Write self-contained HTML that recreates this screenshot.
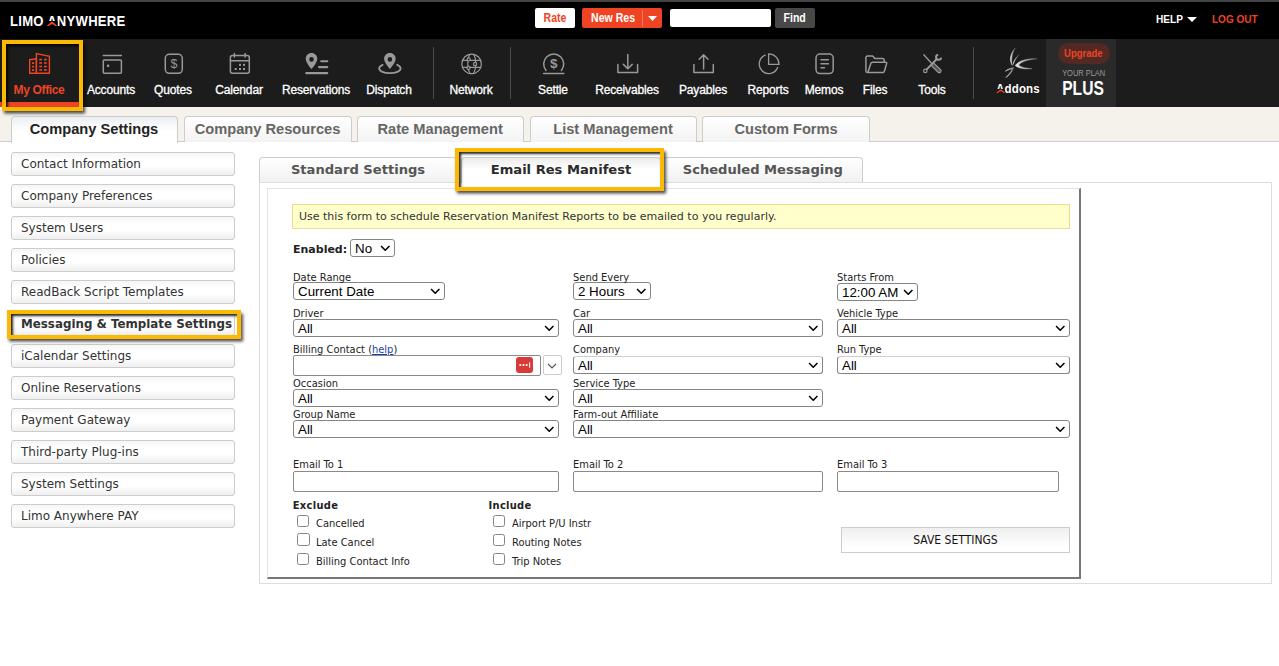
<!DOCTYPE html>
<html lang="en">
<head>
<meta charset="utf-8">
<title>Limo Anywhere - My Office</title>
<style>
*{box-sizing:border-box;margin:0;padding:0}
html,body{width:1279px;height:666px;overflow:hidden;background:#fff;font-family:"Liberation Sans",sans-serif;}
.abs{position:absolute}
#topstrip{position:absolute;left:0;top:0;width:1279px;height:2px;background:#444645}
#hdr{position:absolute;left:0;top:2px;width:1279px;height:37px;background:#000}
#nav{position:absolute;left:0;top:39px;width:1279px;height:68px;background:#1c1c1c}
#beige{position:absolute;left:0;top:107px;width:1279px;height:35px;background:#f5f2ec;border-bottom:1px solid #ccc}
.logo{position:absolute;left:10px;top:11px;color:#fff;font-weight:bold;font-size:15.4px;line-height:16px;letter-spacing:0.3px;white-space:nowrap;transform-origin:left center;transform:scaleX(0.85)}
.hbtn{position:absolute;top:6px;height:20px;border-radius:2px;font-size:12px;font-weight:bold;line-height:20px;text-align:center;white-space:nowrap}
.sx{display:inline-block;transform:scaleX(0.88);transform-origin:center}
.ni{position:absolute;top:0;height:68px;color:#fff;font-size:12px;text-align:center;white-space:nowrap;letter-spacing:-0.15px;-webkit-text-stroke:0.3px #fff}
.ni span{position:absolute;left:-50px;right:-50px;top:43.5px;line-height:14px;text-align:center}
.ni svg{position:absolute;left:50%;top:12px;margin-left:-13px;width:26px;height:26px;fill:none;stroke:#9a9a9a;stroke-width:1.5;stroke-linecap:round;stroke-linejoin:round}
.sep{position:absolute;top:8px;width:1px;height:52px;background:#4a4a4a}
.mtab{position:absolute;top:116px;height:26px;border:1px solid #ccc;border-bottom:none;border-radius:4px 4px 0 0;background:linear-gradient(#fff,#f3f3f3);color:#666;font-weight:bold;font-size:14.65px;line-height:24px;text-align:center;white-space:nowrap}
.mtab.on{background:linear-gradient(#eceff2,#fff 55%);color:#222;height:27px}
.sb{position:absolute;left:11px;width:224px;height:24px;border:1px solid #ccc;border-radius:3px;background:linear-gradient(#f6f6f6 0%,#fff 35%,#fff 60%,#efefef 100%);font-family:"DejaVu Sans",sans-serif;font-size:12px;line-height:22px;color:#333;padding-left:9px;white-space:nowrap}
.stab{position:absolute;top:157px;height:25px;border:1px solid #ccc;border-bottom:none;border-radius:4px 4px 0 0;background:linear-gradient(#fff,#f1f1f1);color:#555;font-family:"DejaVu Sans",sans-serif;font-weight:bold;font-size:13.1px;line-height:24px;text-align:center;white-space:nowrap}
.hl{position:absolute;border:4px solid #fbb904;box-shadow:2px 2.5px 3px rgba(0,0,0,.7), inset 2px 2px 2.5px rgba(0,0,0,.85)}
.lbl{position:absolute;z-index:2;margin-top:0.5px;font-family:"DejaVu Sans Condensed","DejaVu Sans",sans-serif;font-size:11px;line-height:13px;color:#222;white-space:nowrap}
.sel{position:absolute;height:18px;border:1px solid #858585;border-radius:3px;background:#fff;font-size:13.33px;line-height:17.3px;color:#000;padding-left:4px;white-space:nowrap}
.sel svg{position:absolute;right:3.5px;top:5px;width:10.5px;height:6.3px;fill:none;stroke:#000;stroke-width:1.45}
.inp{position:absolute;height:21px;border:1px solid #8a8a8a;border-radius:2px;background:#fff}
.cb{position:absolute;width:12.6px;height:12.3px;border:1px solid #858585;border-radius:2.5px;background:#fff}
</style>
</head>
<body>
<div id="topstrip"></div>
<div id="hdr">
  <div class="logo">LIMO <span style="position:relative">A<i style="position:absolute;left:-0.5px;bottom:2.5px;width:12.5px;height:5.4px;background:#000"></i><svg style="position:absolute;left:-0.8px;bottom:2.9px" width="13" height="5.1" viewBox="0 0 12 6" preserveAspectRatio="none"><path d="M0 6L5 1.2Q6 0.5 7 1.2L12 6L9.4 6Q6 1.7 2.6 6Z" fill="#ee4423"/></svg></span>NYWHERE</div>
  <div class="hbtn" style="left:535px;width:40px;background:#fff;color:#ee4423"><span class="sx">Rate</span></div>
  <div class="hbtn" style="left:582px;width:80px;background:#ee4423;color:#fff;text-align:left;padding-left:6px"><span class="sx">New Res</span><i style="position:absolute;left:60px;top:2px;width:1px;height:16px;background:#f47a60"></i></div>
  <svg class="abs" width="9" height="5" viewBox="0 0 9 5" style="left:648px;top:14px"><path d="M0 0h9L4.5 5z" fill="#fff"/></svg>
  <div class="abs" style="left:670px;top:6.5px;width:101px;height:18px;background:#fff;border-radius:2px"></div>
  <div class="hbtn" style="left:775px;width:40px;background:#484848;color:#fff"><span class="sx">Find</span></div>
  <div class="abs" style="left:1156px;top:10px;color:#fff;font-weight:bold;font-size:11.5px;line-height:14px;white-space:nowrap;transform:scaleX(0.88);transform-origin:left center">HELP</div>
  <svg class="abs" width="10" height="5" viewBox="0 0 10 5" style="left:1187px;top:15px"><path d="M0 0h10L5 5z" fill="#fff"/></svg>
  <div class="abs" style="left:1212px;top:10px;color:#ee4423;font-weight:bold;font-size:11.5px;line-height:14px;white-space:nowrap;transform:scaleX(0.87);transform-origin:left center">LOG OUT</div>
</div>
<div id="nav">
  <div class="abs" style="left:0;top:63px;width:79px;height:5px;background:#ee4423"></div>
<svg class="abs" style="left:0;top:0" width="1279" height="67" viewBox="0 39 1279 67" fill="none" stroke="#999" stroke-width="1.5" stroke-linecap="round" stroke-linejoin="round">
  <!-- My Office -->
  <g stroke="#ee4423" stroke-width="1.4" stroke-linejoin="miter" stroke-linecap="butt">
    <path d="M29.7 73.3V59.7L36.4 58.7V73.3Z"/>
    <path d="M36.4 73.3V53.6L49.4 56.4V73.3Z"/>
    <g stroke="none" fill="#ee4423">
      <rect x="32.1" y="62.2" width="2" height="1.8"/><rect x="32.1" y="65.7" width="2" height="1.8"/><rect x="32.1" y="69.2" width="2" height="1.8"/>
      <rect x="39.2" y="58.8" width="2.8" height="1.6"/><rect x="44" y="58.8" width="2.8" height="1.6"/>
      <rect x="39.2" y="62.2" width="2.8" height="1.6"/><rect x="44" y="62.2" width="2.8" height="1.6"/>
      <rect x="39.2" y="65.7" width="2.8" height="1.6"/><rect x="44" y="65.7" width="2.8" height="1.6"/>
      <rect x="39.2" y="69.2" width="2.8" height="1.6"/><rect x="44" y="69.2" width="2.8" height="1.6"/>
    </g>
  </g>
  <!-- Accounts -->
  <path d="M103.3 55.5H121.4"/>
  <rect x="103.3" y="60.1" width="18.1" height="13.1" rx="1"/>
  <rect x="107" y="64.6" width="2.2" height="2.4" fill="#999" stroke="none"/>
  <!-- Quotes -->
  <rect x="165.3" y="54.3" width="17" height="19" rx="4"/>
  <text x="174" y="68.2" font-family="Liberation Sans, sans-serif" font-size="12.5" text-anchor="middle" fill="#999" stroke="none">$</text>
  <!-- Calendar -->
  <rect x="230.4" y="55.4" width="18.9" height="17.9" rx="2"/>
  <path d="M234.4 53.6V57M245.1 53.6V57M230.4 60.8H249.3"/>
  <g fill="#999" stroke="none">
    <rect x="239" y="63.8" width="2" height="2"/><rect x="243" y="63.8" width="2" height="2"/>
    <rect x="234.7" y="68" width="2" height="2"/><rect x="239" y="68" width="2" height="2"/><rect x="243" y="68" width="2" height="2"/>
  </g>
  <!-- Reservations -->
  <path d="M311.5 53C308.2 53 305.7 55.6 305.7 58.8C305.7 62.8 311.5 69.2 311.5 69.2C311.5 69.2 317.3 62.8 317.3 58.8C317.3 55.6 314.8 53 311.5 53ZM311.5 57.1A2.3 2.3 0 1 1 311.5 61.7A2.3 2.3 0 1 1 311.5 57.1Z" fill="#999" stroke="none" fill-rule="evenodd"/>
  <path d="M321.2 61.2H327.3M319 67.1H327.3M306.2 73.1H327.3" stroke-width="2.1"/>
  <!-- Dispatch -->
  <path d="M389.9 53C386.6 53 384.1 55.6 384.1 58.8C384.1 62.8 389.9 69 389.9 69C389.9 69 395.7 62.8 395.7 58.8C395.7 55.6 393.2 53 389.9 53ZM389.9 57.1A2.3 2.3 0 1 1 389.9 61.7A2.3 2.3 0 1 1 389.9 57.1Z" fill="#999" stroke="none" fill-rule="evenodd"/>
  <path d="M382.6 64.8C380.5 65.7 379.2 67 379.2 68.4C379.2 71.1 384 73.2 389.9 73.2C395.8 73.2 400.6 71.1 400.6 68.4C400.6 67 399.3 65.7 397.2 64.8" stroke-width="1.8"/>
  <!-- Network -->
  <g stroke-width="1.2">
    <circle cx="471.6" cy="63.9" r="9.8"/>
    <path d="M462.6 60.3H480.6M462.6 67.4H480.6"/>
    <path d="M470 54.3C467 58 467 70 470.5 73.6M473.5 54.3C476.5 58 476.5 70 473 73.6"/>
    <circle cx="468.7" cy="59.4" r="1.5" fill="#1c1c1c"/><circle cx="475.1" cy="64" r="1.6" fill="#1c1c1c"/><circle cx="468.5" cy="67.9" r="1.5" fill="#1c1c1c"/>
  </g>
  <!-- Settle -->
  <path d="M546 70.4A10 10 0 1 1 561.4 70.4"/>
  <path d="M543.6 73.5H563.8"/>
  <text x="553.8" y="68.2" font-family="Liberation Sans, sans-serif" font-size="13.5" font-weight="bold" text-anchor="middle" fill="#999" stroke="none">$</text>
  <!-- Receivables -->
  <path d="M617.9 64.4V72.6H637.6V64.4M627.8 54.6V68.6M623.4 64.4L627.8 68.8L632.2 64.4"/>
  <!-- Payables -->
  <path d="M693.9 64.4V72.6H713.3V64.4M703.6 69V54.8M699.2 59.2L703.6 54.8L708 59.2"/>
  <!-- Reports -->
  <path d="M765.2 55.2A9.5 9.5 0 1 0 777.6 67.4" stroke-width="1.3"/>
  <path d="M768.6 53.8V64.3H779A10.4 10.4 0 0 0 768.6 53.8Z" stroke-width="1.3" stroke-linejoin="miter"/>
  <!-- Memos -->
  <rect x="816" y="54" width="17.2" height="19.6" rx="4"/>
  <path d="M821 59.8H828.4M821 63.8H828.4M821 67.7H824.6"/>
  <!-- Files -->
  <path d="M884.2 61.6V60.2Q884.2 58.4 882.4 58.4H874.8L872.6 55.9H867.6Q865.9 55.9 865.9 57.6V70.9Q865.9 72.6 867.6 72.6H882.6Q884 72.6 884.4 71.2L886.6 63.6Q887 62.2 885.6 62.2H872.4Q871.2 62.2 870.8 63.4L867.9 72.2"/>
  <!-- Tools -->
  <g stroke-width="1.3">
    <path d="M923.8 54.8L932 63.8"/>
    <rect x="0" y="-1.75" width="11.6" height="3.5" rx="1.6" transform="translate(932.2 64) rotate(44.5)" stroke-width="1.2" fill="#555"/>
    <path d="M926.5 69.6L936.6 59.2" stroke-width="2"/>
    <circle cx="925.3" cy="70.9" r="1.7" fill="#1c1c1c" stroke-width="1.2"/>
    <path d="M938.2 54.7A2.6 2.6 0 1 0 941.2 57.7" stroke-width="2" stroke-linecap="butt"/>
  </g>
  <!-- Addons swoosh -->
  <defs><linearGradient id="sw" x1="0" y1="0" x2="1" y2="0"><stop offset="0" stop-color="#e8e8e8"/><stop offset="1" stop-color="#777"/></linearGradient></defs>
  <g fill="url(#sw)" stroke="url(#sw)" stroke-width="0.5">
    <path d="M1014.8 48.6C1010.5 53.5 1008.8 60.5 1012.3 65.4C1010.8 60.2 1011.8 54 1014.8 48.6Z"/>
    <path d="M1018.4 55.4C1015.6 57.8 1013.6 61 1013.2 64.4C1014.4 61 1016 58 1018.4 55.4Z"/>
    <path d="M1036.4 58.8C1029 58.4 1019.5 59.8 1015.2 65.6C1019 68.8 1026 69.4 1031.8 68.6C1026.5 68.4 1021.2 67.6 1018.6 65C1022.4 60.8 1029.6 59.6 1036.4 58.8Z"/>
    <path d="M1013.6 67.6C1010.6 67.8 1007.4 69.4 1005.4 71.2C1007.8 70 1010.4 69 1012.2 69C1010.8 72 1008.4 75 1005.8 77.6C1009.6 75.4 1012.6 71.6 1013.6 67.6Z"/>
  </g>
</svg>

  <div class="ni" style="left:39px;color:#ee4423;font-weight:bold;letter-spacing:-0.35px;-webkit-text-stroke:0"><span>My Office</span></div>
  <div class="ni" style="left:111px"><span>Accounts</span></div>
  <div class="ni" style="left:173px"><span>Quotes</span></div>
  <div class="ni" style="left:239px"><span>Calendar</span></div>
  <div class="ni" style="left:316px"><span>Reservations</span></div>
  <div class="ni" style="left:389px"><span>Dispatch</span></div>
  <div class="sep" style="left:433px"></div>
  <div class="ni" style="left:471px"><span>Network</span></div>
  <div class="sep" style="left:510px"></div>
  <div class="ni" style="left:553px"><span>Settle</span></div>
  <div class="ni" style="left:627px"><span>Receivables</span></div>
  <div class="ni" style="left:703px"><span>Payables</span></div>
  <div class="ni" style="left:768px"><span>Reports</span></div>
  <div class="ni" style="left:824px"><span>Memos</span></div>
  <div class="ni" style="left:875px"><span>Files</span></div>
  <div class="ni" style="left:932px"><span>Tools</span></div>
  <div class="sep" style="left:973px"></div>
  <div class="abs" style="left:996px;top:43px;width:44px;color:#fff;font-weight:bold;font-size:13px;line-height:14px;white-space:nowrap"><span style="display:inline-block;transform:scaleX(0.885);transform-origin:left center;letter-spacing:0.2px"><span style="position:relative">A<i style="position:absolute;left:0;bottom:2.9px;width:10px;height:4.3px;background:#1c1c1c"></i><svg style="position:absolute;left:-0.5px;bottom:2.7px" width="10.8" height="4" viewBox="0 0 12 6" preserveAspectRatio="none"><path d="M0 6L5 1.2Q6 0.5 7 1.2L12 6L9.6 6Q6 1 2.4 6Z" fill="#ee4423"/></svg></span>ddons</span></div>
  <div class="abs" style="left:1046px;top:0;width:70px;height:68px;background:#2a2a2a"></div>
  <div class="abs" style="left:1057.5px;top:3.5px;width:52px;height:21.5px;border-radius:11px;background:#522a23;color:#ee4423;font-weight:bold;font-size:11px;line-height:21.5px;text-align:center"><span style="display:inline-block;transform:scaleX(0.86)">Upgrade</span></div>
  <div class="abs" style="left:1044px;top:30px;width:79px;text-align:center;color:#9a9a9a;font-size:8.2px;line-height:10px"><span style="display:inline-block;transform:scaleX(0.91)">YOUR PLAN</span></div>
  <div class="abs" style="left:1044px;top:37px;width:79px;text-align:center;color:#fff;font-weight:bold;font-size:19.5px;line-height:24px"><span style="display:inline-block;transform:scaleX(0.8)">PLUS</span></div>
</div>
<div id="beige"></div>
<div class="hl" style="left:2px;top:40px;width:81px;height:71px;border-width:4px 4.5px"></div>

<div class="mtab on" style="left:10.5px;width:167px">Company Settings</div>
<div class="mtab" style="left:183.5px;width:168px">Company Resources</div>
<div class="mtab" style="left:356.5px;width:167.3px">Rate Management</div>
<div class="mtab" style="left:529.5px;width:167px">List Management</div>
<div class="mtab" style="left:702.2px;width:167.8px">Custom Forms</div>

<div class="sb" style="top:152px">Contact Information</div>
<div class="sb" style="top:184px">Company Preferences</div>
<div class="sb" style="top:216px">System Users</div>
<div class="sb" style="top:248px">Policies</div>
<div class="sb" style="top:280px">ReadBack Script Templates</div>
<div class="sb" style="top:312px;font-weight:bold;font-size:11.85px">Messaging &amp; Template Settings</div>
<div class="sb" style="top:344px">iCalendar Settings</div>
<div class="sb" style="top:376px">Online Reservations</div>
<div class="sb" style="top:408px">Payment Gateway</div>
<div class="sb" style="top:440px">Third-party Plug-ins</div>
<div class="sb" style="top:472px">System Settings</div>
<div class="sb" style="top:504px">Limo Anywhere PAY</div>
<div class="hl" style="left:7px;top:310px;width:234.3px;height:29px;border-width:4.5px"></div>

<div class="abs" style="left:259px;top:182px;width:1013px;height:402px;border:1px solid #ddd"></div>
<div class="abs" style="left:267px;top:188px;width:814px;height:390.6px;border:1px solid #e4e4e4;border-right:2px solid #777;border-bottom:2px solid #777"></div>
<div class="stab" style="left:259px;width:198px">Standard Settings</div>
<div class="stab" style="left:461px;width:200px;background:linear-gradient(#ececec,#fff 45%);color:#2b2b2b;height:26px">Email Res Manifest</div>
<div class="stab" style="left:663px;width:199.7px">Scheduled Messaging</div>
<div class="hl" style="left:454.5px;top:147.5px;width:209px;height:43.5px;border-width:4.3px"></div>

<div class="abs" style="left:292px;top:204px;width:778px;height:25px;background:#ffffcc;border:1px solid #f2d88a;font-family:'DejaVu Sans',sans-serif;font-size:11px;line-height:23px;color:#333;padding-left:6px;white-space:nowrap">Use this form to schedule Reservation Manifest Reports to be emailed to you regularly.</div>

<div class="lbl" style="left:293px;top:242px;font-family:'DejaVu Sans',sans-serif;font-weight:bold;font-size:11px">Enabled:</div>
<div class="sel" style="left:350px;top:239px;width:45px;height:18px">No<svg viewBox="0 0 10 6"><path d="M1 1l4 4 4-4"/></svg></div>

<div class="lbl" style="left:293px;top:270px">Date Range</div>
<div class="sel" style="left:293px;top:282px;width:152px">Current Date<svg viewBox="0 0 10 6"><path d="M1 1l4 4 4-4"/></svg></div>
<div class="lbl" style="left:573px;top:270px">Send Every</div>
<div class="sel" style="left:573px;top:282px;width:78px">2 Hours<svg viewBox="0 0 10 6"><path d="M1 1l4 4 4-4"/></svg></div>
<div class="lbl" style="left:837px;top:270px">Starts From</div>
<div class="sel" style="left:837px;top:282.5px;width:81px">12:00 AM<svg viewBox="0 0 10 6"><path d="M1 1l4 4 4-4"/></svg></div>

<div class="lbl" style="left:293px;top:306px">Driver</div>
<div class="sel" style="left:293px;top:319px;width:266px">All<svg viewBox="0 0 10 6"><path d="M1 1l4 4 4-4"/></svg></div>
<div class="lbl" style="left:573px;top:306px">Car</div>
<div class="sel" style="left:573px;top:319px;width:250px">All<svg viewBox="0 0 10 6"><path d="M1 1l4 4 4-4"/></svg></div>
<div class="lbl" style="left:837px;top:306px">Vehicle Type</div>
<div class="sel" style="left:837px;top:319px;width:233px">All<svg viewBox="0 0 10 6"><path d="M1 1l4 4 4-4"/></svg></div>

<div class="lbl" style="left:293px;top:342.2px">Billing Contact (<span style="color:#1a3ea8;text-decoration:underline">help</span>)</div>
<div class="inp" style="left:292.5px;top:354.5px;width:248.7px;height:21px"></div>
<div class="abs" style="left:515.5px;top:357px;width:17px;height:16px;border-radius:3px;background:#d83a3a"><svg width="17" height="16" viewBox="0 0 16 15"><circle cx="4" cy="7.5" r="1" fill="#fff"/><circle cx="7" cy="7.5" r="1" fill="#fff"/><circle cx="10" cy="7.5" r="1" fill="#fff"/><rect x="12.3" y="5" width="1" height="5" fill="#fff"/></svg></div>
<div class="abs" style="left:542.6px;top:355.3px;width:19px;height:19.6px;border:1px solid #ccc;border-radius:2px;background:#fff"><svg width="10" height="6" viewBox="0 0 10 6" style="position:absolute;left:3.6px;top:6.6px;fill:none;stroke:#555;stroke-width:1.2"><path d="M1 1l4 4 4-4"/></svg></div>
<div class="lbl" style="left:573px;top:342.2px">Company</div>
<div class="sel" style="left:573px;top:356px;width:250px;border-top-color:#cfcfcf">All<svg viewBox="0 0 10 6"><path d="M1 1l4 4 4-4"/></svg></div>
<div class="lbl" style="left:837px;top:342.2px">Run Type</div>
<div class="sel" style="left:837px;top:356px;width:233px;border-top-color:#cfcfcf">All<svg viewBox="0 0 10 6"><path d="M1 1l4 4 4-4"/></svg></div>

<div class="lbl" style="left:293px;top:376.3px">Occasion</div>
<div class="sel" style="left:293px;top:389px;width:266px">All<svg viewBox="0 0 10 6"><path d="M1 1l4 4 4-4"/></svg></div>
<div class="lbl" style="left:573px;top:376.3px">Service Type</div>
<div class="sel" style="left:573px;top:389px;width:250px">All<svg viewBox="0 0 10 6"><path d="M1 1l4 4 4-4"/></svg></div>

<div class="lbl" style="left:293px;top:407.2px">Group Name</div>
<div class="sel" style="left:293px;top:420px;width:266px">All<svg viewBox="0 0 10 6"><path d="M1 1l4 4 4-4"/></svg></div>
<div class="lbl" style="left:573px;top:407.2px">Farm-out Affiliate</div>
<div class="sel" style="left:573px;top:420px;width:497px">All<svg viewBox="0 0 10 6"><path d="M1 1l4 4 4-4"/></svg></div>

<div class="lbl" style="left:293px;top:457.9px">Email To 1</div>
<div class="inp" style="left:293px;top:470.6px;width:266px"></div>
<div class="lbl" style="left:573px;top:457.9px">Email To 2</div>
<div class="inp" style="left:573px;top:470.6px;width:250px"></div>
<div class="lbl" style="left:837px;top:457.9px">Email To 3</div>
<div class="inp" style="left:837px;top:470.6px;width:222px"></div>

<div class="lbl" style="left:292.8px;top:498.5px;font-weight:bold;letter-spacing:0.3px">Exclude</div>
<div class="cb" style="left:297px;top:514.8px;width:12.1px;height:12px"></div><div class="lbl" style="left:316px;top:516.1px">Cancelled</div>
<div class="cb" style="left:296.6px;top:533.3px;width:13px;height:13px"></div><div class="lbl" style="left:316px;top:535.2px">Late Cancel</div>
<div class="cb" style="left:297px;top:552.7px;width:12.1px;height:12px"></div><div class="lbl" style="left:316px;top:554.2px">Billing Contact Info</div>
<div class="lbl" style="left:488.6px;top:498.5px;font-weight:bold;letter-spacing:0.3px">Include</div>
<div class="cb" style="left:493px;top:514.8px;width:12.1px;height:12px"></div><div class="lbl" style="left:512px;top:516.1px">Airport P/U Instr</div>
<div class="cb" style="left:493px;top:533.8px;width:12.1px;height:12px"></div><div class="lbl" style="left:512px;top:535.2px">Routing Notes</div>
<div class="cb" style="left:493px;top:552.7px;width:12.1px;height:12px"></div><div class="lbl" style="left:512px;top:554.2px">Trip Notes</div>

<div class="abs" style="left:841px;top:527px;width:229px;height:25.5px;border:1px solid #ccc;background:linear-gradient(#efefef,#fff 80%);font-family:'DejaVu Sans Condensed',sans-serif;font-size:12px;line-height:25px;text-align:center;color:#111">SAVE SETTINGS</div>
</body>
</html>
